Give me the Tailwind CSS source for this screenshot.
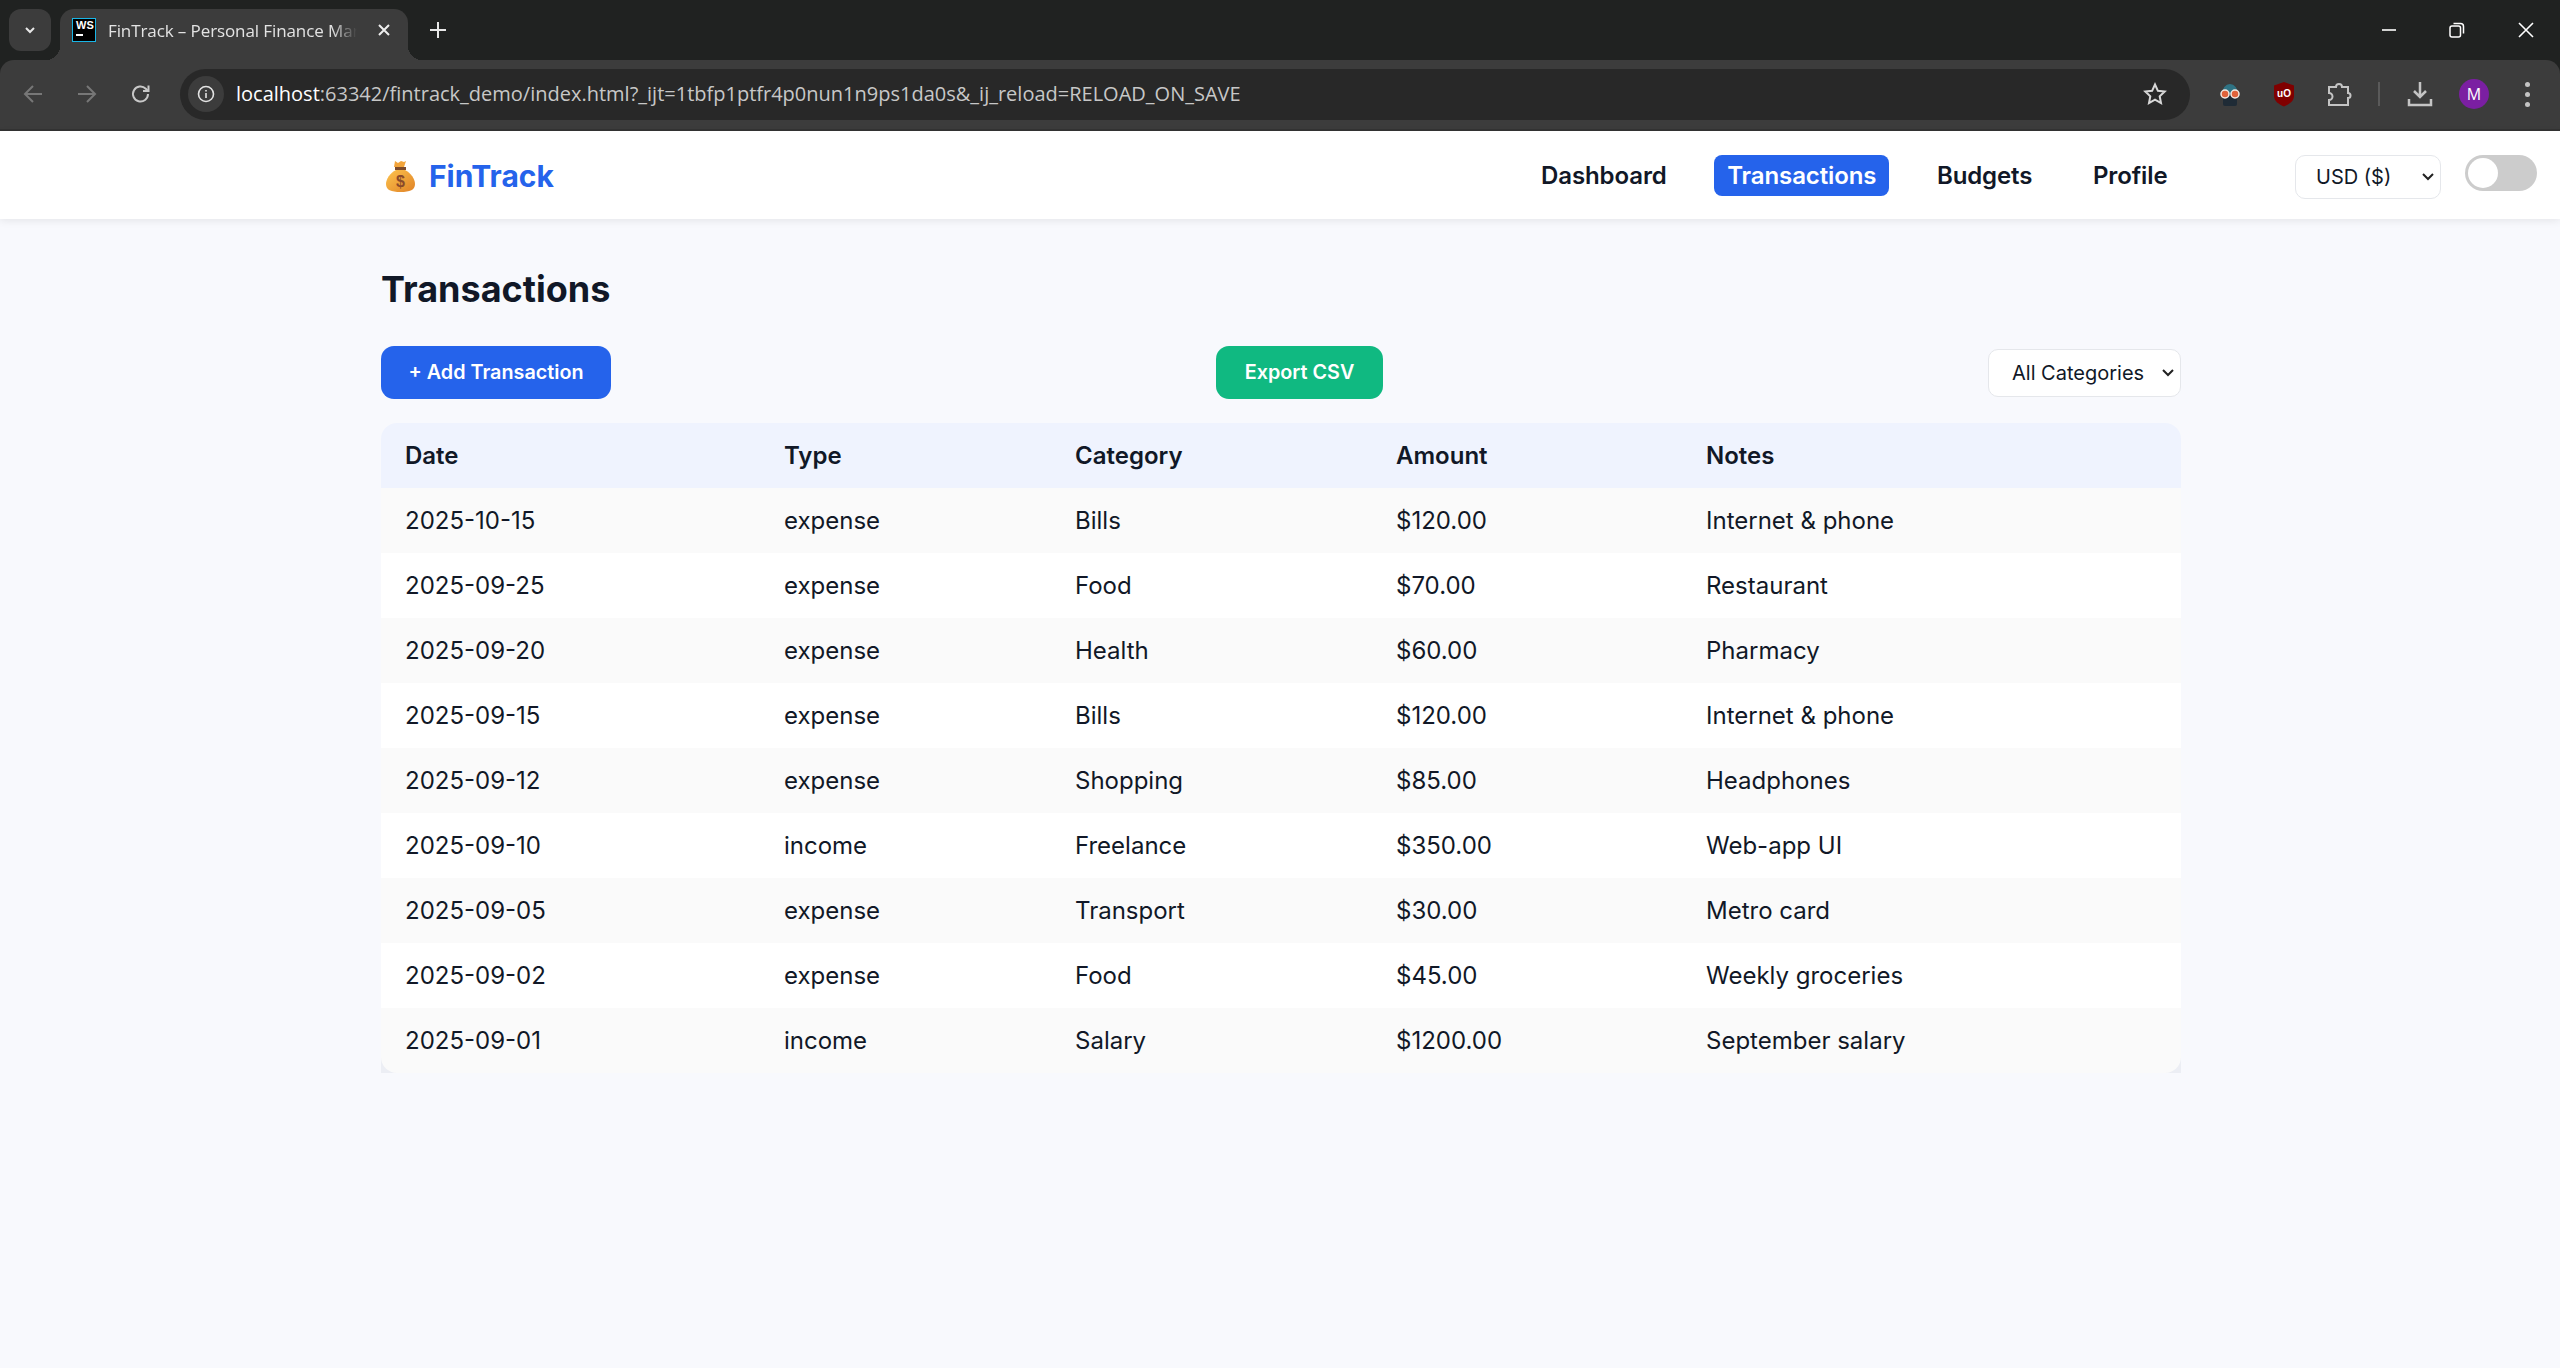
<!DOCTYPE html>
<html lang="en">

<head>
	<meta charset="UTF-8" />
	<meta name="viewport" content="width=device-width, initial-scale=1" />
	<script src="https://cdn.jsdelivr.net/npm/@tailwindcss/browser@4"></script>
	<title>FinTrack – Personal Finance Manager</title>
</head>

<body class="h-[1368px] overflow-hidden flex flex-col bg-[#f8f9fd] font-['Inter',sans-serif] text-[#111827]">

	<div class="bg-[#202221] shrink-0">
		<!-- browser: tab strip -->
		<div class="h-[60px] flex items-end pl-[9px] text-white font-['Open_Sans',sans-serif]">
			<div class="w-[42px] h-[42px] mb-[9px] rounded-[12px] bg-[#3c3c3c] flex items-center justify-center">
				<svg width="14" height="14" viewBox="0 0 14 14" fill="none" stroke="#e8e8e8" stroke-width="2"><path d="M3 5l4 4 4-4" /></svg>
			</div>
			<div class="relative ml-[9px] w-[348px] h-[51px] rounded-t-[14px] bg-[#3c3c3c] flex items-center pl-[12px] pb-[9px]">
				<span class="absolute left-[-14px] bottom-0 w-[14px] h-[14px] bg-[radial-gradient(circle_at_0_0,transparent_14px,#3c3c3c_14px)]"></span>
				<span class="absolute right-[-14px] bottom-0 w-[14px] h-[14px] bg-[radial-gradient(circle_at_100%_0,transparent_14px,#3c3c3c_14px)]"></span>
				<div class="w-[24px] h-[24px] bg-black border border-[#19b5e6] flex flex-col px-[3px] shrink-0">
					<span class="text-[11px] leading-[12px] font-bold text-white font-['Liberation_Sans',sans-serif]">WS</span>
					<span class="mt-[3px] w-[7px] h-[2px] bg-white"></span>
				</div>
				<span class="ml-[12px] mt-[2px] w-[249px] overflow-hidden whitespace-nowrap text-[17px] tracking-[-0.1px] text-[#e3e3e3] [mask-image:linear-gradient(to_right,black_90%,transparent)]">FinTrack – Personal Finance Manager</span>
				<svg class="ml-[20px]" width="14" height="14" viewBox="0 0 14 14" stroke="#eee" stroke-width="2"><path d="M2 2l10 10M12 2L2 12" /></svg>
			</div>
			<svg class="ml-[22px] mb-[22px]" width="16" height="16" viewBox="0 0 16 16" stroke="#e8e8e8" stroke-width="2"><path d="M8 0v16M0 8h16" /></svg>
			<div class="ml-auto flex items-center mb-[22px]">
				<svg width="16" height="16" viewBox="0 0 16 16" stroke="#fff" stroke-width="1.6"><path d="M1 8h14" /></svg>
				<svg class="ml-[52px]" width="16" height="16" viewBox="0 0 16 16" fill="none" stroke="#fff" stroke-width="1.500"><rect x="1" y="4" width="10.500" height="11" rx="2" /><path d="M4.500 1.500h7a3 3 0 0 1 3 3v7" /></svg>
				<svg class="ml-[53px] mr-[26px]" width="16" height="16" viewBox="0 0 16 16" stroke="#fff" stroke-width="1.600"><path d="M1 1l14 14M15 1L1 15" /></svg>
			</div>
		</div>

		<!-- browser: toolbar -->
		<div class="h-[71px] bg-[#3c3c3c] rounded-t-[14px] flex items-center pb-[1px] pl-[23px] border-b-2 border-[#333]">
			<svg width="20" height="20" viewBox="0 0 20 20" fill="none" stroke="#777" stroke-width="2"><path d="M19 10H2M10 2l-8 8 8 8" /></svg>
			<svg class="ml-[34px]" width="20" height="20" viewBox="0 0 20 20" fill="none" stroke="#777" stroke-width="2"><path d="M1 10h17M10 2l8 8-8 8" /></svg>
			<svg class="ml-[33px]" width="22" height="22" viewBox="0 0 22 22" fill="none" stroke="#c8c8c8" stroke-width="2"><path d="M18 11a7.500 7.500 0 1 1-2.200-5.300L18 8" /><path d="M18.500 2.500V8H13" /></svg>
			<div class="ml-[28px] w-[2010px] h-[51px] rounded-full bg-[#282828] flex items-center pl-[8px] pr-[23px]">
				<div class="w-[36px] h-[36px] rounded-full bg-[#3c3c3c] flex items-center justify-center">
					<svg width="20" height="20" viewBox="0 0 20 20" fill="none" stroke="#e3e3e3" stroke-width="1.600"><circle cx="10" cy="10" r="7.500" /><path d="M10 9v5M10 6v1.600" /></svg>
				</div>
				<span class="ml-[12px] text-[20px] whitespace-nowrap text-[#c7c7c7] font-['Open_Sans',sans-serif]"><span class="text-white">localhost</span>:63342/fintrack_demo/index.html?_ijt=1tbfp1ptfr4p0nun1n9ps1da0s&amp;_ij_reload=RELOAD_ON_SAVE</span>
				<svg class="ml-auto" width="24" height="24" viewBox="0 0 24 24" fill="none" stroke="#d8d8d8" stroke-width="2"><path d="M12 2.500l2.900 6.300 6.800.8-5 4.700 1.300 6.700-6-3.400-6 3.400 1.300-6.700-5-4.700 6.800-.8z" /></svg>
			</div>
			<!-- extensions -->
			<svg class="ml-[28px]" width="24" height="26" viewBox="0 0 24 26"><path d="M4 13a8 10 0 0 1 16 0z" fill="#2f7384" /><rect x="5" y="15" width="14" height="10" rx="2" fill="#1f2b36" /><circle cx="7" cy="13" r="4" fill="#e0623a" stroke="#f3e9e2" stroke-width="1.500" /><circle cx="17" cy="13" r="4" fill="#e0623a" stroke="#f3e9e2" stroke-width="1.500" /></svg>
			<svg class="ml-[30px]" width="24" height="26" viewBox="0 0 24 26"><path d="M12 1l10 3.500V15c0 5-5 8.500-10 10.500C7 23.500 2 20 2 15V4.500z" fill="#800000" /><text x="12" y="16" text-anchor="middle" font-family="Liberation Sans" font-size="10" font-weight="700" fill="#fff">uO</text></svg>
			<svg class="ml-[31px]" width="26" height="26" viewBox="0 0 26 26" fill="none" stroke="#c4c4c4" stroke-width="2"><path d="M2 6h7a3 3 0 0 1 6 0h6v6a2.500 2.500 0 0 1 0 5v7H2v-5a3 3 0 0 0 0-7z" /></svg>
			<div class="ml-[25px] w-[2px] h-[24px] bg-[#5a5a5a]"></div>
			<svg class="ml-[27px]" width="26" height="26" viewBox="0 0 26 26" fill="none" stroke="#c4c4c4" stroke-width="2.500"><path d="M13 1v15M7 10l6 6 6-6M2 18v6h22v-6" /></svg>
			<div class="ml-[26px] w-[30px] h-[30px] rounded-full bg-[#7b1fa2] text-white text-[16px] flex items-center justify-center font-['Open_Sans',sans-serif]">M</div>
			<div class="ml-[36px] flex flex-col gap-[5px]">
				<span class="w-[5px] h-[5px] rounded-full bg-[#c4c4c4]"></span>
				<span class="w-[5px] h-[5px] rounded-full bg-[#c4c4c4]"></span>
				<span class="w-[5px] h-[5px] rounded-full bg-[#c4c4c4]"></span>
			</div>
		</div>
	</div>

	<!-- navbar -->
	<header class="h-[88px] shrink-0 bg-white shadow-[0_2px_8px_rgba(0,0,0,0.08)] flex items-center pl-[385px] pr-[23px]">
		<svg class="mt-[2px]" width="31" height="32" viewBox="0 0 31 32">
			<defs>
				<linearGradient id="bag" x1="0" y1="0" x2="1" y2="1">
					<stop offset="0" stop-color="#fdc44e" />
					<stop offset="1" stop-color="#e08226" />
				</linearGradient>
			</defs>
			<path d="M10 1l3 2 3-2 3 1 2-1-2 6h-10z" fill="#f2a43a" />
			<rect x="10" y="7" width="11" height="3" fill="#7c4a2a" />
			<path d="M11 10h9c6 3 10 9 10 14 0 6-5 8-14.500 8S1 30 1 24c0-5 4-11 10-14z" fill="url(#bag)" />
			<text x="15.500" y="27" text-anchor="middle" font-family="Liberation Sans" font-size="16" font-weight="700" fill="#8a4a2a">$</text>
		</svg>
		<span class="ml-[13px] w-[124px] pt-[2px] text-[30px] font-bold leading-none text-[#2563eb]">FinTrack</span>
		<nav class="ml-[975px] flex items-center gap-[34.500px] text-[24px] tracking-[-0.1px] font-semibold leading-[41px] self-start mt-[24px]">
			<a class="px-[13px] rounded-[8px]">Dashboard</a>
			<a class="px-[13px] rounded-[8px] bg-[#2563eb] text-white">Transactions</a>
			<a class="px-[13px] rounded-[8px]">Budgets</a>
			<a class="px-[13px] rounded-[8px]">Profile</a>
		</nav>
		<div class="ml-auto flex items-start self-start mt-[24px] gap-[24px]">
			<div class="relative">
				<select class="block appearance-none w-[146px] h-[44px] rounded-[10px] border border-[#e5e7eb] bg-white pl-[20px] text-[20px]">
					<option>USD ($)</option>
				</select>
				<svg class="absolute right-[6px] top-[17px]" width="14" height="10" viewBox="0 0 14 10" fill="none" stroke="#222" stroke-width="2"><path d="M2 2l5 5 5-5" /></svg>
			</div>
			<div class="w-[72px] h-[36px] rounded-full bg-[#ccc] p-[3px]">
				<div class="w-[30px] h-[30px] rounded-full bg-white"></div>
			</div>
		</div>
	</header>

	<!-- page -->
	<main class="w-[1800px] ml-[381px]">
		<h1 class="mt-[47px] text-[36px] leading-[46px] font-bold">Transactions</h1>
		<div class="mt-[34px] h-[53px] flex items-center justify-between">
			<button class="w-[230px] h-[53px] rounded-[13px] bg-[#2563eb] text-white text-[19.800px] font-semibold">+ Add Transaction</button>
			<button class="w-[167px] h-[53px] rounded-[13px] bg-[#10b981] text-white text-[19.800px] font-semibold">Export CSV</button>
			<div class="relative">
				<select class="block appearance-none w-[193px] h-[48px] rounded-[10px] border border-[#e5e7eb] bg-white pl-[23px] text-[20px]">
					<option>All Categories</option>
				</select>
				<svg class="absolute right-[6px] top-[19px]" width="14" height="10" viewBox="0 0 14 10" fill="none" stroke="#222" stroke-width="2"><path d="M2 2l5 5 5-5" /></svg>
			</div>
		</div>

		<div class="mt-[24px] bg-[linear-gradient(to_top,#eceef4_16px,transparent_16px)]">
			<table class="w-[1800px] table-fixed border-separate border-spacing-0 rounded-[16px] overflow-hidden text-[24px]">
				<colgroup>
					<col class="w-[379px]" />
					<col class="w-[291px]" />
					<col class="w-[321px]" />
					<col class="w-[310px]" />
					<col />
				</colgroup>
				<thead class="bg-[#eff3fe] text-left">
					<tr class="h-[65px]">
						<th class="pl-[24px] font-semibold">Date</th>
						<th class="pl-[24px] font-semibold">Type</th>
						<th class="pl-[24px] font-semibold">Category</th>
						<th class="pl-[24px] font-semibold">Amount</th>
						<th class="pl-[24px] font-semibold">Notes</th>
					</tr>
				</thead>
				<tbody>
					<tr class="h-[65px] bg-[#fafafa]"><td class="pl-[24px]">2025-10-15</td><td class="pl-[24px]">expense</td><td class="pl-[24px]">Bills</td><td class="pl-[24px]">$120.00</td><td class="pl-[24px]">Internet &amp; phone</td></tr>
					<tr class="h-[65px] bg-white"><td class="pl-[24px]">2025-09-25</td><td class="pl-[24px]">expense</td><td class="pl-[24px]">Food</td><td class="pl-[24px]">$70.00</td><td class="pl-[24px]">Restaurant</td></tr>
					<tr class="h-[65px] bg-[#fafafa]"><td class="pl-[24px]">2025-09-20</td><td class="pl-[24px]">expense</td><td class="pl-[24px]">Health</td><td class="pl-[24px]">$60.00</td><td class="pl-[24px]">Pharmacy</td></tr>
					<tr class="h-[65px] bg-white"><td class="pl-[24px]">2025-09-15</td><td class="pl-[24px]">expense</td><td class="pl-[24px]">Bills</td><td class="pl-[24px]">$120.00</td><td class="pl-[24px]">Internet &amp; phone</td></tr>
					<tr class="h-[65px] bg-[#fafafa]"><td class="pl-[24px]">2025-09-12</td><td class="pl-[24px]">expense</td><td class="pl-[24px]">Shopping</td><td class="pl-[24px]">$85.00</td><td class="pl-[24px]">Headphones</td></tr>
					<tr class="h-[65px] bg-white"><td class="pl-[24px]">2025-09-10</td><td class="pl-[24px]">income</td><td class="pl-[24px]">Freelance</td><td class="pl-[24px]">$350.00</td><td class="pl-[24px]">Web-app UI</td></tr>
					<tr class="h-[65px] bg-[#fafafa]"><td class="pl-[24px]">2025-09-05</td><td class="pl-[24px]">expense</td><td class="pl-[24px]">Transport</td><td class="pl-[24px]">$30.00</td><td class="pl-[24px]">Metro card</td></tr>
					<tr class="h-[65px] bg-white"><td class="pl-[24px]">2025-09-02</td><td class="pl-[24px]">expense</td><td class="pl-[24px]">Food</td><td class="pl-[24px]">$45.00</td><td class="pl-[24px]">Weekly groceries</td></tr>
					<tr class="h-[65px] bg-[#fafafa]"><td class="pl-[24px]">2025-09-01</td><td class="pl-[24px]">income</td><td class="pl-[24px]">Salary</td><td class="pl-[24px]">$1200.00</td><td class="pl-[24px]">September salary</td></tr>
				</tbody>
			</table>
		</div>
	</main>
</body>

</html>
